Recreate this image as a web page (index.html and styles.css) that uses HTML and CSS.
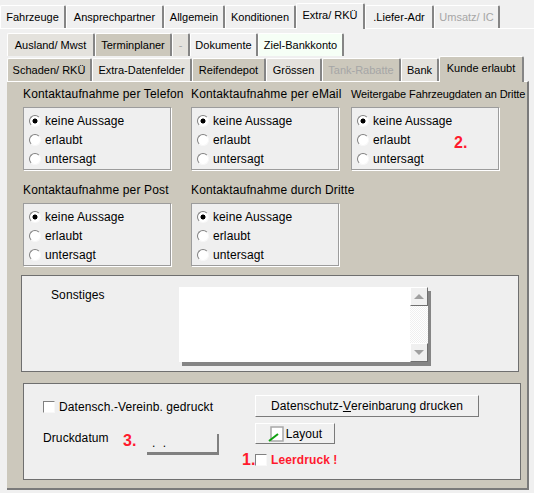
FILE: index.html
```html
<!DOCTYPE html>
<html lang="de">
<head>
    <meta charset="UTF-8">
    <title>Kunde erlaubt</title>
    <link rel="stylesheet" href="styles.css">
</head>
<body>
    <div class="tabs top-tabs">
        <div class="tab w-66">Fahrzeuge</div>
        <div class="tab w-98">Ansprechpartner</div>
        <div class="tab w-61">Allgemein</div>
        <div class="tab w-71">Konditionen</div>
        <div class="tab w-69 current">Extra/ RKÜ</div>
        <div class="tab w-69">.Liefer-Adr</div>
        <div class="tab w-66 disabled">Umsatz/ IC</div>
    </div>

    <div class="sheet">
        <div class="tabs second-tabs">
            <div class="tab w-88">Ausland/ Mwst</div>
            <div class="tab w-77 dark">Terminplaner</div>
            <div class="tab w-18 disabled">-</div>
            <div class="tab w-68 light">Dokumente</div>
            <div class="tab w-86 mint">Ziel-Bankkonto</div>
        </div>
        <div class="tabs third-tabs">
            <div class="tab w-85 dark">Schaden/ RKÜ</div>
            <div class="tab w-100">Extra-Datenfelder</div>
            <div class="tab w-74 dark">Reifendepot</div>
            <div class="tab w-56">Grössen</div>
            <div class="tab w-79 dark disabled">Tank-Rabatte</div>
            <div class="tab w-38">Bank</div>
            <div class="tab w-85 dark current">Kunde erlaubt</div>
        </div>

        <div class="panel">
            <div class="choices">
                <div class="choice">
                    <div class="choice-title">Kontaktaufnahme per Telefon</div>
                    <div class="radio-box">
                        <div class="radio-row"><span class="radio on"></span>keine Aussage</div>
                        <div class="radio-row"><span class="radio"></span>erlaubt</div>
                        <div class="radio-row"><span class="radio"></span>untersagt</div>
                    </div>
                </div>
                <div class="choice">
                    <div class="choice-title">Kontaktaufnahme per eMail</div>
                    <div class="radio-box">
                        <div class="radio-row"><span class="radio on"></span>keine Aussage</div>
                        <div class="radio-row"><span class="radio"></span>erlaubt</div>
                        <div class="radio-row"><span class="radio"></span>untersagt</div>
                    </div>
                </div>
                <div class="choice">
                    <div class="choice-title small">Weitergabe Fahrzeugdaten an Dritte</div>
                    <div class="radio-box">
                        <div class="radio-row"><span class="radio on"></span>keine Aussage</div>
                        <div class="radio-row"><span class="radio"></span>erlaubt</div>
                        <div class="radio-row"><span class="radio"></span>untersagt</div>
                        <span class="mark mark-two">2.</span>
                    </div>
                </div>
                <div class="choice">
                    <div class="choice-title">Kontaktaufnahme per Post</div>
                    <div class="radio-box">
                        <div class="radio-row"><span class="radio on"></span>keine Aussage</div>
                        <div class="radio-row"><span class="radio"></span>erlaubt</div>
                        <div class="radio-row"><span class="radio"></span>untersagt</div>
                    </div>
                </div>
                <div class="choice">
                    <div class="choice-title">Kontaktaufnahme durch Dritte</div>
                    <div class="radio-box">
                        <div class="radio-row"><span class="radio on"></span>keine Aussage</div>
                        <div class="radio-row"><span class="radio"></span>erlaubt</div>
                        <div class="radio-row"><span class="radio"></span>untersagt</div>
                    </div>
                </div>
            </div>

            <div class="notes">
                <div class="notes-label">Sonstiges</div>
                <div class="memo">
                    <div class="memo-text"></div>
                    <div class="scrollbar">
                        <div class="scroll-btn"><span class="arrow-up"></span></div>
                        <div class="scroll-track"></div>
                        <div class="scroll-btn"><span class="arrow-down"></span></div>
                    </div>
                </div>
            </div>

            <div class="print">
                <div class="print-left">
                    <div class="check-row"><span class="check"></span>Datensch.-Vereinb. gedruckt</div>
                    <div class="date-row">
                        <span class="date-label">Druckdatum</span>
                        <span class="mark mark-three">3.</span>
                        <span class="date-field">. .</span>
                    </div>
                </div>
                <div class="print-right">
                    <div class="btn btn-wide">Datenschutz-<u>V</u>ereinbarung drucken</div>
                    <div class="btn btn-layout">
                        <svg class="layout-icon" width="16" height="16" viewBox="0 0 16 16">
                            <rect x="3" y="1" width="12" height="14" fill="#fff" stroke="#a8a8a8" stroke-width="1.5"/>
                            <path d="M1 15 L10 8" stroke="#10a010" stroke-width="2"/>
                        </svg>
                        Layout
                    </div>
                    <div class="blank-row">
                        <span class="mark mark-one">1.</span><span class="check"></span><span class="blank-label">Leerdruck !</span>
                    </div>
                </div>
            </div>
        </div>
    </div>
</body>
</html>
```

FILE: styles.css
```css
html, body {
    margin: 0;
    padding: 0;
}

body {
    width: 534px;
    height: 493px;
    overflow: hidden;
    background-color: #f0f0f0;
    font-family: "Liberation Sans", Arial, sans-serif;
    font-size: 12px;
    letter-spacing: 0.1px;
    color: #000;
}

/* tabs */
.tabs {
    display: flex;
    align-items: flex-end;
}

.top-tabs {
    height: 23px;
    padding-top: 5px;
}

.tab {
    box-sizing: border-box;
    height: 23px;
    padding-top: 4px;
    font-size: 11px;
    letter-spacing: 0;
    line-height: 14px;
    text-align: center;
    white-space: nowrap;
    background-color: #f0f0f0;
    border-top: 1px solid #fff;
    border-left: 1px solid #fff;
    border-right: 2px solid #858585;
    border-radius: 2px 2px 0 0;
}

.w-18 { width: 18px; }
.w-38 { width: 38px; }
.w-56 { width: 56px; }
.w-61 { width: 61px; }
.w-66 { width: 66px; }
.w-68 { width: 68px; }
.w-69 { width: 69px; }
.w-71 { width: 71px; }
.w-74 { width: 74px; }
.w-77 { width: 77px; }
.w-79 { width: 79px; }
.w-85 { width: 85px; }
.w-86 { width: 86px; }
.w-88 { width: 88px; }
.w-98 { width: 98px; }
.w-100 { width: 100px; }

.tab.disabled { color: #a6a6a6; }

.tab.current {
    position: relative;
    height: 26px;
    margin-bottom: -1px;
}

.sheet {
    box-sizing: border-box;
    height: 465px;
    padding: 4px 0 0 7px;
    border-top: 1px solid #fff;
}

.second-tabs {
    height: 23px;
}

.third-tabs {
    height: 25px;
}

.sheet .tab {
    background-color: #e4e2dd;
}

.sheet .tab.dark { background-color: #ccc8bc; }
.sheet .tab.light { background-color: #f2f2f2; }
.sheet .tab.mint { background-color: #f6fff6; }

/* main panel */
.panel {
    box-sizing: border-box;
    width: 522px;
    height: 409px;
    padding-left: 14px;
    background-color: #ccc8bc;
    border-top: 1px solid #fff;
    border-right: 2px solid #7a7a7a;
    border-bottom: 2px solid #7a7a7a;
}

.choices {
    display: grid;
    grid-template-columns: 168px 160px 160px;
    grid-auto-rows: 96px;
}

.choice {
    padding: 5px 0 0 2px;
}

.choice-title {
    height: 20px;
    letter-spacing: 0.15px;
    line-height: 15px;
    white-space: nowrap;
}

.choice-title.small {
    font-size: 11px;
    letter-spacing: -0.1px;
}

.radio-box {
    position: relative;
    box-sizing: border-box;
    width: 148px;
    height: 63px;
    padding-top: 3px;
    background-color: #efefef;
    border: 1px solid #9c9c9c;
    box-shadow: 1px 1px 0 #fff;
}

.radio-row {
    display: flex;
    align-items: center;
    height: 19px;
    padding-left: 5px;
}

.radio {
    box-sizing: border-box;
    width: 12px;
    height: 12px;
    margin-right: 4px;
    border: 1px solid;
    border-color: #808080 #f8f8f8 #f8f8f8 #808080;
    border-radius: 50%;
    background-color: #fff;
}

.radio.on {
    background: radial-gradient(circle, #000 0, #000 2.2px, #fff 2.8px);
}

.mark {
    color: #ff1a2e;
    font-weight: bold;
    font-size: 16px;
    letter-spacing: 0;
    line-height: 18px;
}

.mark-two {
    position: absolute;
    left: 102px;
    top: 26px;
}

/* Sonstiges */
.notes {
    box-sizing: border-box;
    display: flex;
    width: 498px;
    height: 97px;
    margin-top: 1px;
    padding: 11px 0 0 29px;
    background-color: #efefef;
    border: 1px solid #6f6f6f;
}

.notes-label {
    width: 128px;
    margin-top: 1px;
    line-height: 15px;
}

.memo {
    display: flex;
    width: 249px;
    height: 75px;
    box-shadow: 3px 4px 0 #858585;
}

.memo-text {
    flex: 1;
    background-color: #fff;
}

.scrollbar {
    display: flex;
    flex-direction: column;
    width: 18px;
}

.scroll-btn {
    box-sizing: border-box;
    display: flex;
    align-items: center;
    justify-content: center;
    height: 19px;
    background-color: #f0f0f0;
    border: 1px solid;
    border-color: #fff #6f6f6f #6f6f6f #fff;
}

.scroll-track {
    flex: 1;
    background: repeating-conic-gradient(#fff 0 25%, #f0f0f0 0 50%) 0 0 / 2px 2px;
}

.arrow-up {
    border-left: 5px solid transparent;
    border-right: 5px solid transparent;
    border-bottom: 5px solid #a0a0a0;
}

.arrow-down {
    border-left: 5px solid transparent;
    border-right: 5px solid transparent;
    border-top: 5px solid #a0a0a0;
}

/* print area */
.print {
    box-sizing: border-box;
    display: flex;
    width: 498px;
    height: 97px;
    margin-top: 11px;
    margin-left: 2px;
    padding: 11px 0 0 19px;
    background-color: #efefef;
    border: 1px solid #6f6f6f;
}

.print-left {
    width: 212px;
}

.check-row {
    display: flex;
    align-items: center;
    height: 22px;
    margin-top: 1px;
}

.check {
    box-sizing: border-box;
    flex: none;
    width: 12px;
    height: 12px;
    margin-right: 4px;
    background-color: #fff;
    border: 1px solid;
    border-color: #808080 #f8f8f8 #f8f8f8 #808080;
}

.date-row {
    display: flex;
    align-items: flex-start;
    margin-top: 12px;
}

.date-label {
    width: 80px;
    margin-top: 1px;
    line-height: 15px;
}

.mark-three {
    width: 24px;
    line-height: 22px;
}

.date-field {
    box-sizing: border-box;
    width: 72px;
    height: 21px;
    margin-top: 4px;
    padding-left: 5px;
    line-height: 18px;
    word-spacing: 4px;
    border-right: 2px solid #808080;
    border-bottom: 3px solid #808080;
}

.btn {
    box-sizing: border-box;
    display: flex;
    align-items: center;
    justify-content: center;
    height: 22px;
    background-color: #f0f0f0;
    border: 1px solid;
    border-color: #fff #7a7a7a #7a7a7a #fff;
}

.btn-wide {
    width: 224px;
}

.btn-layout {
    width: 80px;
    height: 21px;
    margin-top: 6px;
}

.layout-icon {
    margin-right: 2px;
}

.blank-row {
    position: relative;
    display: flex;
    align-items: center;
    height: 13px;
    margin-top: 9px;
}

.mark-one {
    position: absolute;
    left: -13px;
    top: -2px;
}

.blank-label {
    color: #ff1a2e;
    font-weight: bold;
    font-size: 12px;
}
```
